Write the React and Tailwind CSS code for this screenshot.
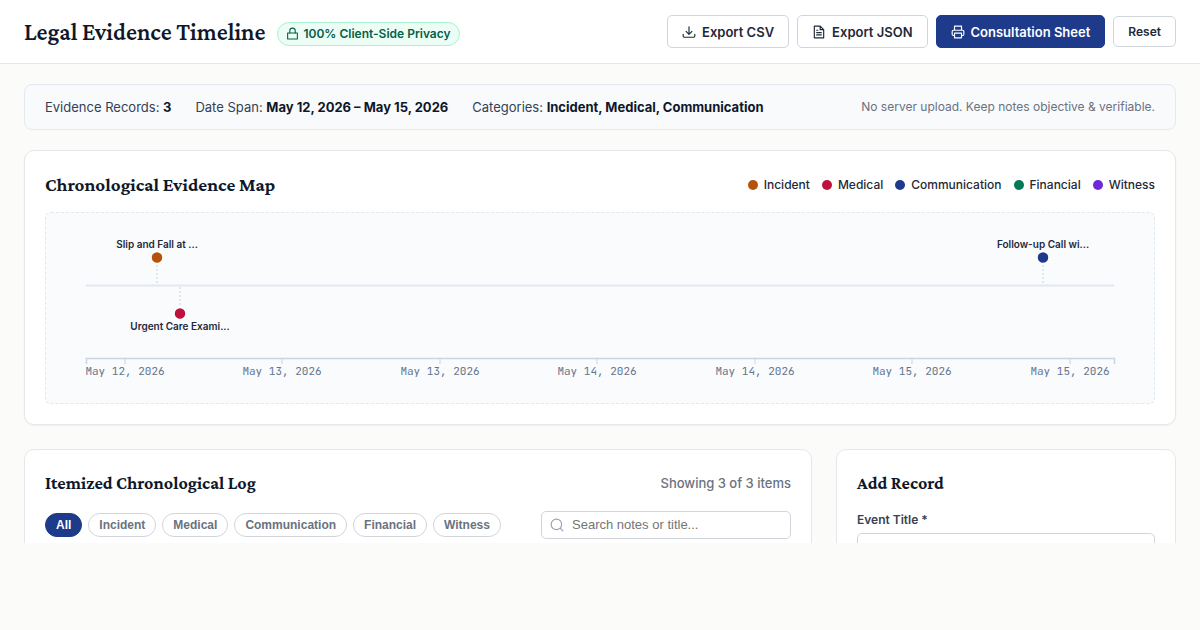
const categories = [
  { name: 'Incident', dot: 'bg-[#b45309]' },
  { name: 'Medical', dot: 'bg-[#be123c]' },
  { name: 'Communication', dot: 'bg-[#1e3a8a]' },
  { name: 'Financial', dot: 'bg-[#047857]' },
  { name: 'Witness', dot: 'bg-[#6d28d9]' },
]

const filters = ['All', 'Incident', 'Medical', 'Communication', 'Financial', 'Witness']

const ticks = [
  { x: 79, label: 'May 12, 2026' },
  { x: 236, label: 'May 13, 2026' },
  { x: 394, label: 'May 13, 2026' },
  { x: 551, label: 'May 14, 2026' },
  { x: 709, label: 'May 14, 2026' },
  { x: 866, label: 'May 15, 2026' },
  { x: 1024, label: 'May 15, 2026' },
]

const events = [
  { x: 111, above: true, color: '#b45309', label: 'Slip and Fall at ...' },
  { x: 134, above: false, color: '#be123c', label: 'Urgent Care Exami...' },
  { x: 997, above: true, color: '#1e3a8a', label: 'Follow-up Call wi...' },
]

const serif = "font-['Crimson_Pro','Liberation_Serif',serif]"

function Icon({ className, children }) {
  return (
    <svg
      className={className}
      viewBox="0 0 24 24"
      fill="none"
      stroke="currentColor"
      strokeWidth="2"
      strokeLinecap="round"
      strokeLinejoin="round"
      aria-hidden="true"
    >
      {children}
    </svg>
  )
}

function Header() {
  const button =
    'flex h-[33px] items-center gap-1.5 rounded-[5px] border px-3.5 text-[13px] leading-5 font-semibold'

  return (
    <header className="flex h-16 items-center justify-between border-b border-[#e5e7eb] bg-white px-6">
      <div className="flex items-center gap-3">
        <h1 className={`${serif} text-2xl font-semibold text-[#0f172a]`}>Legal Evidence Timeline</h1>
        <span className="mt-1 flex h-6 items-center gap-1 rounded-full border border-[#a7f3d0] bg-[#ecfdf5] px-2 text-xs font-semibold text-[#065f46]">
          <Icon className="size-[13px]">
            <path d="M3 11h18v11H3z" />
            <path d="M7 11V7a5 5 0 0 1 10 0v4" />
          </Icon>
          100% Client-Side Privacy
        </span>
      </div>
      <div className="flex items-center gap-2">
        <button type="button" className={`${button} border-[#d1d5db] bg-white text-[#1f2937]`}>
          <Icon className="size-3.5">
            <path d="M2 16v3a2 2 0 0 0 2 2h16a2 2 0 0 0 2-2v-3M7 11l5 5 5-5M12 16V3" />
          </Icon>
          Export CSV
        </button>
        <button type="button" className={`${button} border-[#d1d5db] bg-white text-[#1f2937]`}>
          <Icon className="size-3.5">
            <path d="M14 2H4v20h16V8zM14 2v6h6M8 13h8M8 17h8M8 9h2" />
          </Icon>
          Export JSON
        </button>
        <button type="button" className={`${button} border-[#1e3a8a] bg-[#1e3a8a] text-white`}>
          <Icon className="size-3.5">
            <path d="M6 9V2h12v7M6 18H4a2 2 0 0 1-2-2v-5a2 2 0 0 1 2-2h16a2 2 0 0 1 2 2v5a2 2 0 0 1-2 2h-2M6 14h12v8H6z" />
          </Icon>
          Consultation Sheet
        </button>
        <button
          type="button"
          className="h-[31px] rounded-[5px] border border-[#d1d5db] bg-white px-3.5 text-xs font-semibold text-[#1f2937]"
        >
          Reset
        </button>
      </div>
    </header>
  )
}

function Summary() {
  return (
    <section className="flex items-center justify-between rounded-lg border border-[#e2e8f0] bg-[#f8fafc] px-5 py-3 text-[13px] leading-5 text-[#334155]">
      <div className="flex gap-6">
        <p>Evidence Records: <strong className="font-bold text-[#0f172a]">3</strong></p>
        <p>Date Span: <strong className="font-bold text-[#0f172a]">May 12, 2026 – May 15, 2026</strong></p>
        <p>Categories: <strong className="font-bold text-[#0f172a]">Incident, Medical, Communication</strong></p>
      </div>
      <p className="text-xs text-[#6b7280]">No server upload. Keep notes objective &amp; verifiable.</p>
    </section>
  )
}

function TimelineChart() {
  return (
    <svg className="block w-full" viewBox="0 0 1108 190" role="img" aria-label="Evidence timeline">
      <path d="M40 72.5H1068" stroke="#e2e8f0" strokeWidth="2" />
      {events.map((event) => (
        <g key={event.label}>
          <path
            d={event.above ? `M${event.x} 44V72` : `M${event.x} 74V100`}
            stroke="#cbd5e1"
            strokeDasharray="2 2"
          />
          <circle
            cx={event.x}
            cy={event.above ? 44.5 : 100.5}
            r="6"
            fill={event.color}
            stroke="#ffffff"
            strokeWidth="1.5"
          />
          <text
            x={event.x}
            y={event.above ? 35 : 117}
            textAnchor="middle"
            fill="#1e293b"
            className="text-[10px] font-semibold"
          >
            {event.label}
          </text>
        </g>
      ))}
      <path d="M40.5 151V145.5H1068.5V151" fill="none" stroke="#cbd5e1" strokeWidth="1.5" />
      {ticks.map((tick) => (
        <g key={tick.x}>
          <path d={`M${tick.x} 145V151`} stroke="#cbd5e1" />
          <text
            x={tick.x}
            y="162"
            textAnchor="middle"
            fill="#64748b"
            className="font-['JetBrains_Mono','Liberation_Mono',monospace] text-[11px]"
          >
            {tick.label}
          </text>
        </g>
      ))}
    </svg>
  )
}

function EvidenceMap() {
  return (
    <section className="rounded-[10px] border border-[#e5e7eb] bg-white p-5 shadow-xs">
      <div className="mb-[13px] flex h-7 items-center justify-between">
        <h2 className={`${serif} text-[19px] font-bold text-[#0f172a]`}>Chronological Evidence Map</h2>
        <ul className="flex gap-3 text-xs font-medium text-[#1f2937]">
          {categories.map((category) => (
            <li key={category.name} className="flex items-center gap-1.5">
              <span className={`size-2.5 rounded-full ${category.dot}`} />
              {category.name}
            </li>
          ))}
        </ul>
      </div>
      <div className="rounded-md border border-dashed border-[#e2e8f0] bg-[#fafbfd]">
        <TimelineChart />
      </div>
    </section>
  )
}

function EvidenceLog() {
  return (
    <section className="rounded-[10px] border border-[#e5e7eb] bg-white p-5">
      <div className="mb-[15px] flex h-[26px] items-center justify-between">
        <h2 className={`${serif} text-lg font-bold text-[#0f172a]`}>Itemized Chronological Log</h2>
        <p className="text-[13px] leading-5 font-medium text-[#6b7280]">Showing 3 of 3 items</p>
      </div>
      <div className="flex items-center justify-between">
        <div className="flex gap-1.5 font-['Liberation_Sans',Arial,sans-serif] text-xs font-bold">
          {filters.map((filter) => (
            <button
              key={filter}
              type="button"
              className={`h-6 rounded-full border px-2.5 ${
                filter === 'All'
                  ? 'border-[#1e3a8a] bg-[#1e3a8a] text-white'
                  : 'border-[#d1d5db] bg-white text-[#6b7280]'
              }`}
            >
              {filter}
            </button>
          ))}
        </div>
        <label className="flex h-7 w-[250px] items-center gap-2 rounded-[5px] border border-[#d1d5db] bg-white px-2">
          <Icon className="size-3.5 shrink-0 text-[#9ca3af]">
            <circle cx="11" cy="11" r="9" />
            <path d="m18 18 4 4" />
          </Icon>
          <input
            type="search"
            aria-label="Search records"
            placeholder="Search notes or title..."
            className="w-full min-w-0 font-['Liberation_Sans',Arial,sans-serif] text-[13px] outline-none placeholder:text-[#757575]"
          />
        </label>
      </div>
    </section>
  )
}

function AddRecord() {
  return (
    <section className="rounded-[10px] border border-[#e5e7eb] bg-white p-5">
      <h2 className={`${serif} mb-[15px] text-lg leading-[26px] font-bold text-[#0f172a]`}>Add Record</h2>
      <label htmlFor="event-title" className="mb-1 block text-xs leading-[18px] font-semibold text-[#374151]">
        Event Title *
      </label>
      <input id="event-title" type="text" className="block h-8 w-full rounded-[5px] border border-[#d1d5db] px-2.5 text-[13px]" />
    </section>
  )
}

function App() {
  return (
    <div className="min-h-screen bg-[#fbfbf9] font-['Inter',sans-serif]">
      <Header />
      <main className="px-6 pt-5">
        <div className="flex flex-col gap-5">
          <Summary />
          <EvidenceMap />
        </div>
        {/* preview strip: only the top of both panels shows */}
        <div className="mt-6 grid h-[94px] grid-cols-[1fr_340px] items-start gap-6 overflow-hidden">
          <EvidenceLog />
          <AddRecord />
        </div>
      </main>
    </div>
  )
}

export default App
